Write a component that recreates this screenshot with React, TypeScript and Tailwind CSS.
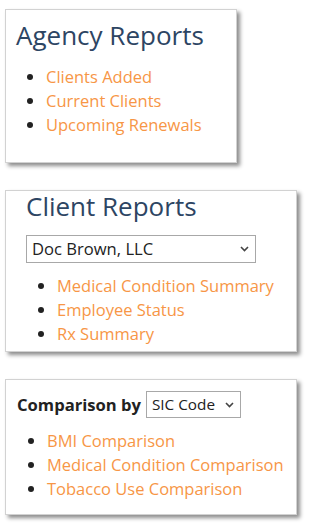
import React from 'react';

const font = { fontFamily: '"Open Sans", "Liberation Sans", sans-serif' };

function Chevron() {
    return (
        <svg width="9" height="6" viewBox="0 0 9 6" className="pointer-events-none absolute top-1/2 -translate-y-1/2 right-[7px]">
            <path d="M1 1 L4.5 4.5 L8 1" fill="none" stroke="#444" strokeWidth="1.6" />
        </svg>
    );
}

function Dropdown({ value, options, width, size }: { value: string; options: string[]; width: string; size: string }) {
    return (
        <div className={`relative ${width}`}>
            <select
                defaultValue={value}
                className={`appearance-none w-full h-full bg-white border border-[#a8a8a8] pl-[5px] text-[#222] outline-none ${size}`}
                style={font}
            >
                {options.map((o) => (
                    <option key={o}>{o}</option>
                ))}
            </select>
            <Chevron />
        </div>
    );
}

function LinkList({ items, className }: { items: string[]; className: string }) {
    return (
        <ul className={`list-disc text-[16.5px] leading-[24px] marker:text-[#222] ${className}`}>
            {items.map((item) => (
                <li key={item}>
                    <a href="#" className="text-[#f79646]">{item}</a>
                </li>
            ))}
        </ul>
    );
}

export default function App() {
    return (
        <div className="bg-white min-h-[527px] pt-[9px] pl-[5px]" style={font}>

            {/* Agency reports */}
            <section className="w-[232px] border border-[#d2d2d2] bg-white shadow-[3px_3px_4px_rgba(0,0,0,0.45)] pt-[9px] pl-[10px] pb-[25px]">
                <h2 className="text-[26px] leading-[32px] text-[#2d4563]">Agency Reports</h2>
                <LinkList
                    className="mt-[14px] pl-[30px]"
                    items={['Clients Added', 'Current Clients', 'Upcoming Renewals']}
                />
            </section>

            {/* Client reports */}
            <section className="mt-[27px] w-[292px] border border-[#d2d2d2] bg-white shadow-[3px_3px_4px_rgba(0,0,0,0.45)] pt-[1px] pl-[20px] pb-[5px]">
                <h2 className="text-[26px] leading-[28px] text-[#2d4563]">Client Reports</h2>
                <div className="mt-[15px] h-[28px]">
                    <Dropdown value="Doc Brown, LLC" options={['Doc Brown, LLC']} width="w-[230px] h-[28px]" size="text-[16.6px]" />
                </div>
                <LinkList
                    className="mt-[11px] pl-[31px]"
                    items={['Medical Condition Summary', 'Employee Status', 'Rx Summary']}
                />
            </section>

            {/* Comparison */}
            <section className="mt-[27px] w-[292px] border border-[#d2d2d2] bg-white shadow-[3px_3px_4px_rgba(0,0,0,0.45)] pt-[11px] pl-[11px] pb-[13px]">
                <div className="flex items-center gap-[5px]">
                    <span className="text-[16.6px] leading-[24px] font-bold text-[#222]">Comparison by</span>
                    <Dropdown value="SIC Code" options={['SIC Code']} width="w-[95px] h-[27px]" size="text-[15.3px]" />
                </div>
                <LinkList
                    className="mt-[11px] pl-[30px]"
                    items={['BMI Comparison', 'Medical Condition Comparison', 'Tobacco Use Comparison']}
                />
            </section>
        </div>
    );
}
